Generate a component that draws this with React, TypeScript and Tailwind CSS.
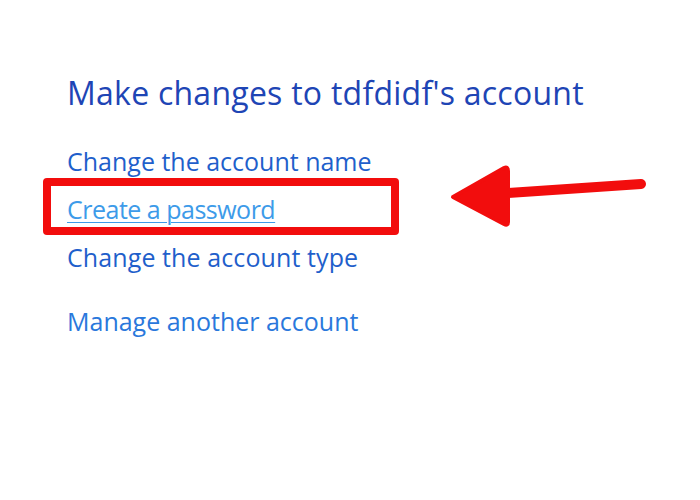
import React from "react";

// ── Link row ─────────────────────────────────────────────────────
function AccountLink({ label, className = "" }: { label: string; className?: string }) {
  return (
    <a href="#" className={`block text-[25px] leading-[30px] ${className}`}>
      {label}
    </a>
  );
}

// ── Red arrow pointing left ─────────────────────────────────────
function RedArrow() {
  return (
    <svg width="200" height="70" viewBox="0 0 200 70" className="block">
      <path d="M58 31 L191 22" stroke="#f20d0d" strokeWidth="10" strokeLinecap="round" fill="none" />
      <path
        d="M3 35 L54 6 Q58 4 58 9 L58 60 Q58 64 54 62 Z"
        fill="#f20d0d"
        stroke="#f20d0d"
        strokeWidth="4"
        strokeLinejoin="round"
      />
    </svg>
  );
}

export default function App() {
  return (
    <div
      className="w-[700px] h-[500px] bg-white pl-[67px] pt-[71px]"
      style={{ fontFamily: '"Open Sans", "Noto Sans", sans-serif' }}
    >
      <h1 className="text-[32px] leading-[44px] tracking-[0.25px] text-[#1e45b5] font-normal">
        Make changes to tdfdidf's account
      </h1>

      <div className="mt-[31px] text-[#1f5fcb]">
        <AccountLink label="Change the account name" />

        <div className="relative mt-[18px]">
          <div className="absolute left-[-24px] top-[-16px] w-[356px] h-[57px] border-[8px] border-[#f20d0d] rounded-[4px]" />
          <div className="absolute left-[383px] top-[-32px]">
            <RedArrow />
          </div>
          <AccountLink
            label="Create a password"
            className="text-[#3d9be9] tracking-[-0.5px] underline decoration-1 underline-offset-[3px]"
          />
        </div>

        <AccountLink label="Change the account type" className="mt-[18px] tracking-[0.1px]" />
        <AccountLink label="Manage another account" className="mt-[34px] text-[#2a78dc]" />
      </div>
    </div>
  );
}
